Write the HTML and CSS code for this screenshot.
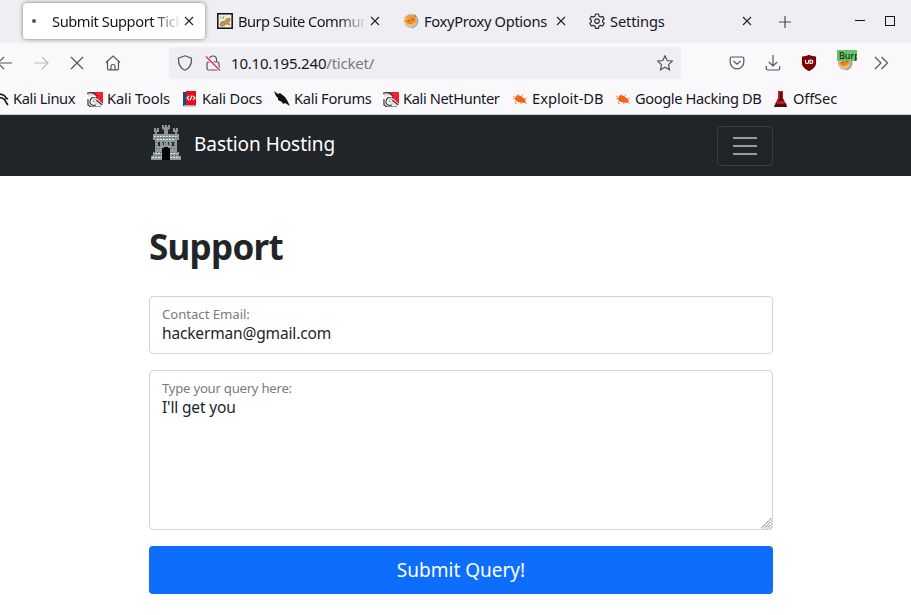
FILE: index.html
```html
<!DOCTYPE html>
<html lang="en">
<head>
<meta charset="utf-8">
<title>Submit Support Ticket</title>
<link rel="stylesheet" href="styles.css">
</head>
<body>
<svg class="defs" width="0" height="0" aria-hidden="true">
  <symbol id="close" viewBox="0 0 16 16"><path d="M4 4l8 8M12 4l-8 8" fill="none" stroke="#222129" stroke-width="1.1"/></symbol>
  <symbol id="dragon" viewBox="0 0 16 16"><path d="M3 1h13v12z" fill="#f4212c"/><path d="M0 3c4-2 8-1 10 3l-2 1 5 5v2h-3l-5-3" fill="#ddd"/><path d="M0 2.500c5-2 8 0 10 3M10 7c-4-2-7 0-7 4 0 3 3 4 6 3M6 10c2-2 4-1 9 4M1 8v6l3 2h10" fill="none" stroke="#333" stroke-width="1.200"/><path d="M1 8c2-3 5-3 8-2M4 11c1-3 4-2 5-1" fill="none" stroke="#fff" stroke-width="1.200"/></symbol>
  <symbol id="bug" viewBox="0 0 16 16"><path d="M3 7l2-3 4 1 4 3 1 3-3 1-5-1-3-2z" fill="#f26419"/><path d="M1 5l3 2-3 1M6 4l1-1M10 5l1-2M13 8l2-1M4 10l-1 2 2 1M8 11l1 2M12 11l3 2" fill="none" stroke="#f48a50" stroke-width=".9"/></symbol>
  <symbol id="fox" viewBox="0 0 16 16"><circle cx="8.300" cy="8" r="7.300" fill="#c3c5ca"/><circle cx="7.500" cy="7.500" r="6" fill="#f0a04a"/><path d="M3 5l3 1 5-3 1 5-3 3H5L3 8z" fill="#ec8a22"/><path d="M11 1l3 3-2-.5z" fill="#555"/><path d="M0 4l5 3M2 10c3 3 7 3 10 0" fill="none" stroke="#f8c88a" stroke-width="1.300"/><path d="M4.500 7l2 1M9 7l2-1" stroke="#9a5518"/><path d="M14 5c2 4-1 9-5 10" fill="none" stroke="#999"/></symbol>
</svg>

<div class="browser">
  <div class="tabs">
    <div class="tab active"><span class="icon"><i class="throbber"></i></span><span class="label fade first">Submit Support Ticket</span><svg class="x"><use href="#close"/></svg></div>
    <div class="tab"><svg class="icon" viewBox="0 0 16 16"><path d="M.8.800h14.400v14.400H.8z" fill="#ededdc" stroke="#111" stroke-width="1.500"/><path d="M3 12l1-3 4-1 2-3 1 1 2-1v3l-2 1 2 3-3-1-3 1-2 1z" fill="#cf9238" stroke="#6e603f" stroke-width=".5"/><path d="M3 4l2 1M7 3l-1 3M3 13h5" stroke="#999"/></svg><span class="label fade second">Burp Suite Community</span><svg class="x"><use href="#close"/></svg></div>
    <div class="tab"><svg class="icon"><use href="#fox"/></svg><span class="label tight">FoxyProxy Options</span><svg class="x"><use href="#close"/></svg></div>
    <div class="tab"><svg class="icon" viewBox="0 0 16 16" fill="none" stroke="#2d2d35" stroke-width="1.200" stroke-linejoin="round"><path d="M6.500 1h3l.5 2.200 1.500.900 2.200-.700 1.500 2.600L13.600 7.200v1.700l1.600 1.400-1.500 2.600-2.200-.600-1.500.900-.5 2.100h-3L6 13.200l-1.500-.900-2.200.600L.8 10.300l1.600-1.400V7.200L.8 6l1.500-2.600 2.200.700L6 3.200z"/><circle cx="8" cy="8.100" r="2.300"/></svg><span class="label light">Settings</span><svg class="x"><use href="#close"/></svg></div>
    <svg class="plus" viewBox="0 0 16 16"><path d="M8 2v12M2 8h12" stroke="#4b4b55" stroke-width="1.200"/></svg>
    <i class="minimize"></i><i class="maximize"></i>
  </div>

  <div class="toolbar">
    <div class="nav">
      <svg viewBox="0 0 16 16"><path d="M15 8H1M7 2L1 8l6 6"/></svg>
      <svg class="off" viewBox="0 0 16 16"><path d="M1 8h14M9 2l6 6-6 6"/></svg>
      <svg viewBox="0 0 16 16"><path d="M2 2l12 12M14 2L2 14"/></svg>
      <svg viewBox="0 0 16 16"><path d="M1 7.500L8 1l7 6.500M2.500 6.500v7q0 1.300 1.300 1.300h8.400q1.300 0 1.300-1.300v-7M6 14.500V11q0-1.500 2-1.500t2 1.500v3.500"/></svg>
    </div>
    <div class="url">
      <svg viewBox="0 0 16 16"><path d="M8 .8l6.500 2.400c.300 5-.8 9.600-6.500 12C2.300 12.800 1.200 8.200 1.500 3.200z"/></svg>
      <svg viewBox="0 0 16 16"><path d="M4.500 7V4.500a3.500 3.500 0 0 1 7 0V7M3.500 7h9q1.500 0 1.500 1.500v5q0 1.500-1.500 1.500h-9Q2 15 2 13.500v-5Q2 7 3.500 7z"/><path d="M1 1.500l14 14" stroke="#efeff3" stroke-width="3"/><path d="M1 1.500l14 14" stroke="#e22850" stroke-width="1.300"/></svg>
      <span class="address">10.10.195.240<span class="path">/ticket/</span></span>
      <svg class="star" viewBox="0 0 16 16"><path d="M8 .8l2.200 4.700 5.100.6-3.800 3.500 1 5.200L8 12.300l-4.500 2.500 1-5.200L.7 6.100l5.100-.6z"/></svg>
    </div>
    <div class="tools">
      <svg viewBox="0 0 16 16"><path d="M2.500 2h11q1.300 0 1.300 1.300V7a6.800 6.800 0 0 1-13.600 0V3.300Q1.200 2 2.500 2zM4.500 6L8 9.300 11.500 6"/></svg>
      <svg viewBox="0 0 16 16"><path d="M8 0v11M3.800 7L8 11l4.200-4M1.300 11v2.500q0 1.500 1.500 1.500h10.400q1.500 0 1.500-1.500V11"/></svg>
      <svg viewBox="0 0 16 16"><path d="M8 .5c2 1 4 1.500 6.500 1.700V8c0 3.500-3 5.700-6.500 7.500C4.500 13.700 1.500 11.500 1.500 8V2.200C4 2 6 1.500 8 .5z" fill="#800000" stroke="#700"/><path d="M4.500 5v2.200q0 1.300 1.500 1.300t1.500-1.300V5M9 5h.5q2.300 0 2.300 1.700T9.500 8.500H9z" stroke="#fff" stroke-width="1.100"/></svg>
      <span class="proxy"><svg><use href="#fox"/></svg><b>Burp</b></span>
      <svg viewBox="0 0 16 16"><path d="M2 2l6 6-6 6M8.500 2l6 6-6 6"/></svg>
    </div>
  </div>

  <div class="bookmarks">
    <div><svg viewBox="0 0 16 16"><path d="M5 3c4 0 7 1 8 4l2 1M5 7c3-1 5 0 7 2 1 3 2 4 3 5" fill="none" stroke="#222" stroke-width="1.800"/></svg><span class="tighter">Kali Linux</span></div>
    <div><svg><use href="#dragon"/></svg><span class="light">Kali Tools</span></div>
    <div><svg viewBox="0 0 16 16"><path d="M1 1h3v14H1z" fill="#174a78"/><path d="M4 0h10v14H4z" fill="#e3101c"/><path d="M2 14h12v1.500H2z" fill="#aaa"/><path d="M7 5L5 7l2 2M10 4.500L8 9.500M11 5l2 2-2 2" fill="none" stroke="#fff" stroke-width="1.100"/></svg><span class="snug">Kali Docs</span></div>
    <div><svg viewBox="0 0 16 16"><path d="M0 0l4 3 2-1 5 4 2 3 3 6-5-3-2 1-1-2-4-2V7L2 5z" fill="#111"/></svg><span class="tight">Kali Forums</span></div>
    <div><svg><use href="#dragon"/></svg><span class="tighter">Kali NetHunter</span></div>
    <div><svg><use href="#bug"/></svg><span>Exploit-DB</span></div>
    <div><svg><use href="#bug"/></svg><span class="tighter">Google Hacking DB</span></div>
    <div><svg viewBox="0 0 16 16"><path d="M5 0h5v7l2 4 2 5H1l2-5 2-4z" fill="#d4151d"/><path d="M7 1h2v6l2 3H5l2-3zM3 12l3 1h4l3-1 1 4H1z" fill="#431016"/></svg><span class="light">OffSec</span></div>
  </div>
</div>

<header class="navbar">
  <div class="container">
    <a class="brand"><svg viewBox="0 0 32 36" shape-rendering="crispEdges"><path d="M3 9h26v6H3zM5 15h22v12H5zM3 27h26v4H3zM1 31h30v4H1z" fill="#8e979a"/><path d="M4 3h2v2h1V3h2v4H7v3H5V7H4zM23 3h2v2h1V3h2v4h-1v3h-2V7h-2zM12 0h2v2h1V0h2v2h1V0h2v4h-2v5h-4V4h-2z" fill="#8d9697"/><path d="M13 2h1v3h-1zM18 2h1v3h-1z" fill="#bd7b5d"/><path d="M4 11.500h24M7 14.500h18M2 32.500h28M5 28.500h22" stroke="#e0e5e6" stroke-dasharray="2 1"/><path d="M5 12.500h23M6 17.500h20M5 20.500h6m10 0h6M6 23.500h5m10 0h5M4 27.500h8m8 0h8M2 30.500h8m12 0h8" stroke="#596165" stroke-dasharray="1 2"/><path d="M8 17h2v4H8zM22 17h2v4h-2zM13 17h1v3h-1zM18 17h1v3h-1z" fill="#252b2f"/><path d="M12 35V25q0-3 4-3t4 3v10z" fill="#000"/></svg><span>Bastion Hosting</span></a>
    <span class="toggler"><i></i><i></i><i></i></span>
  </div>
</header>

<main class="container">
  <h1>Support</h1>
  <div class="field email"><span class="hint">Contact Email:</span><span class="value">hackerman@gmail.com</span></div>
  <div class="field query"><span class="hint">Type your query here:</span><span class="value">I'll get you</span>
    <svg class="grip" viewBox="0 0 11 11"><path d="M0 10.500L10.500 0M3 10.500L10.500 3M6 10.500L10.500 6M9 10.500l1.500-1.500" stroke="#555" stroke-dasharray="1.400 .5"/></svg></div>
  <div class="submit">Submit Query!</div>
</main>
</body>
</html>
```
FILE: styles.css
```css
* { box-sizing: border-box; }
body { margin: 0; width: 911px; height: 615px; overflow: hidden; background: #fff; color: #212529; font-family: "Noto Sans", sans-serif; font-size: 16px; }
.defs { position: absolute; }
.browser { height: 115px; background: #f9f9fb; border-bottom: 1px solid #ccc; color: #17161d; font-size: 14.67px; overflow: hidden; white-space: nowrap; }
.light { letter-spacing: -.14px; }
.snug { letter-spacing: -.24px; }
.tight { letter-spacing: -.31px; }
.tighter { letter-spacing: -.39px; }
.first { letter-spacing: -.42px; }
.second { letter-spacing: -.52px; }
.tabs { height: 43px; background: #efeff3; display: flex; align-items: center; padding-left: 23px; }
.tab { width: 182px; height: 36px; margin: 0 4px 1px 0; padding: 0 8px; border-radius: 4px; display: flex; align-items: center; flex: none; }
.active { background: #fff; box-shadow: 0 0 4px #777; }
.icon { width: 16px; height: 16px; flex: none; }
.throbber { display: block; width: 4px; height: 4px; border-radius: 50%; margin: 6px 0 0 1px; background: #555560; }
.label { flex: 1; overflow: hidden; margin-left: 5px; line-height: 24px; }
.fade { mask-image: linear-gradient(90deg, #000 78%, transparent); }
.x { width: 16px; height: 16px; flex: none; }
.plus { width: 16px; height: 16px; margin-left: 10px; flex: none; }
.minimize { width: 10px; height: 1px; background: #111; margin: 0 20px 2px 62px; flex: none; }
.maximize { width: 10px; height: 10px; border: 1px solid #111; margin-bottom: 1px; flex: none; }
.toolbar { height: 40px; display: flex; align-items: center; }
.toolbar svg { width: 16px; height: 16px; fill: none; stroke: #55555f; stroke-width: 1.2; flex: none; }
.toolbar .off { stroke: #bbbbc0; }
.nav { width: 172px; display: flex; gap: 20px; margin-left: -3px; flex: none; }
.url { width: 512px; height: 32px; border-radius: 4px; background: #efeff3; display: flex; align-items: center; padding: 0 8px; flex: none; }
.url svg + svg { margin-left: 12px; }
.address { flex: 1; margin-left: 10px; font-size: 15px; letter-spacing: -.2px; }
.path { color: #77777f; }
.tools { margin-left: 48px; display: flex; gap: 20px; }
.proxy { position: relative; width: 16px; height: 16px; }
.toolbar .proxy svg { stroke: none; }
.proxy b { position: absolute; left: 0; top: -5px; width: 20px; height: 11px; background: #64c465; color: #111; font-size: 9px; font-weight: 400; line-height: 11px; padding-left: 2px; overflow: hidden; }
.bookmarks { display: grid; grid-template-columns: 94px 95px 92px 109px 129px 103px 158px 80px; margin-left: -7px; height: 31px; align-items: center; }
.bookmarks div { display: flex; gap: 4px; align-items: center; }
.bookmarks span { margin-top: -2px; }
.bookmarks svg { width: 16px; height: 16px; flex: none; }
.container { width: 624px; margin: 0 auto 0 149px; }
.navbar { height: 61px; background: #212529; color: #fff; }
.navbar .container { height: 61px; display: flex; align-items: center; justify-content: space-between; }
.brand { display: flex; align-items: center; font-size: 19px; letter-spacing: -.05px; gap: 11px; }
.brand span { margin-top: -4px; }
.brand svg { width: 32px; height: 36px; margin: 0 1px 5px 1px; }
.toggler { width: 56px; height: 40px; border: 1px solid #3a3e42; border-radius: 4px; display: grid; align-content: center; justify-content: center; gap: 6px; }
.toggler i { width: 24px; height: 2px; background: #999b9d; }
h1 { font-size: 35px; letter-spacing: -.72px; line-height: 46px; margin: 48px 0 26px; }
.field { border: 1px solid #ced4da; border-radius: 4px; padding: 8px 12px; margin-bottom: 16px; position: relative; }
.field span { display: block; }
.value { font-size: 15.5px; line-height: 20px; letter-spacing: -.16px; }
.hint { font-size: 13.2px; color: #7a7c7e; line-height: 18px; letter-spacing: -.05px; }
.query .hint { letter-spacing: -.27px; }
.email { height: 58px; }
.query { height: 160px; }
.grip { position: absolute; width: 11px; height: 11px; right: 0; bottom: 0; }
.submit { height: 48px; border-radius: 4px; background: #0d6efd; color: #fff; font-size: 19px; letter-spacing: 0; line-height: 48px; text-align: center; }
```
